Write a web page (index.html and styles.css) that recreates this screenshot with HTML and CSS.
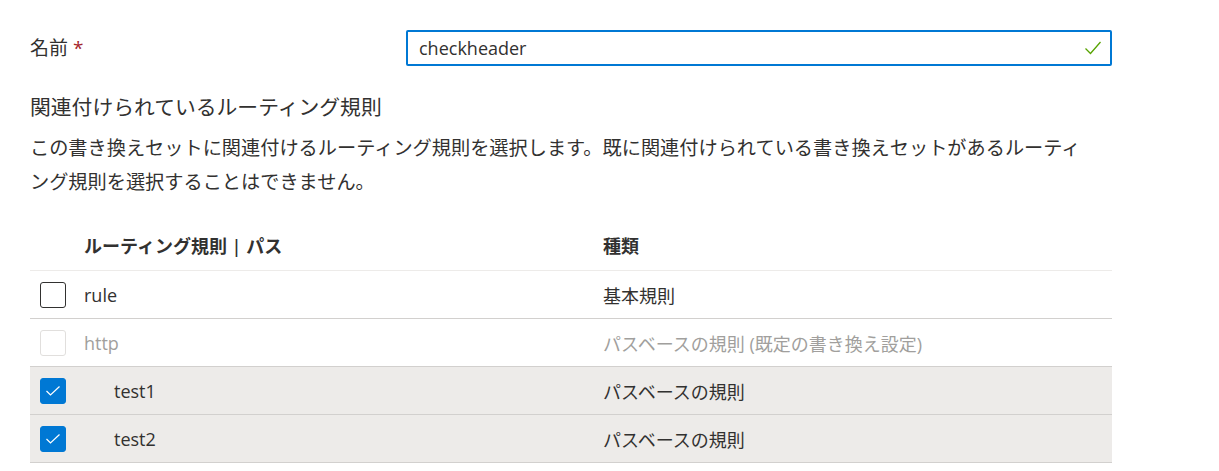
FILE: index.html
```html
<!DOCTYPE html>
<html lang="ja">
<head>
  <meta charset="UTF-8">
  <title>書き換えセット</title>
  <link rel="stylesheet" href="styles.css">
</head>
<body>
  <div class="page">

    <div class="field">
      <label class="field-label" for="name">名前 <span class="req">*</span></label>
      <div class="textbox">
        <input id="name" type="text" value="checkheader">
        <svg class="valid" width="18" height="16" viewBox="0 0 18 16">
          <path d="M1.5 8.5 L6.5 13.5 L16.5 2" fill="none" stroke="#57a300" stroke-width="1.3"/>
        </svg>
      </div>
    </div>

    <h2 class="section-title">関連付けられているルーティング規則</h2>
    <p class="section-desc">この書き換えセットに関連付けるルーティング規則を選択します。既に関連付けられている書き換えセットがあるルーティング規則を選択することはできません。</p>

    <div class="grid">
      <div class="grid-row grid-head">
        <div class="cell"></div>
        <div class="cell">ルーティング規則 | パス</div>
        <div class="cell">種類</div>
      </div>

      <div class="grid-row">
        <div class="cell"><span class="box"></span></div>
        <div class="cell">rule</div>
        <div class="cell">基本規則</div>
      </div>

      <div class="grid-row disabled">
        <div class="cell"><span class="box"></span></div>
        <div class="cell">http</div>
        <div class="cell">パスベースの規則 (既定の書き換え設定)</div>
      </div>

      <div class="grid-row selected">
        <div class="cell"><span class="box checked"><svg width="16" height="12" viewBox="0 0 16 12"><path d="M1.5 6 L5.5 10 L14.5 1.5" fill="none" stroke="#fff" stroke-width="1.2"/></svg></span></div>
        <div class="cell child">test1</div>
        <div class="cell">パスベースの規則</div>
      </div>

      <div class="grid-row selected">
        <div class="cell"><span class="box checked"><svg width="16" height="12" viewBox="0 0 16 12"><path d="M1.5 6 L5.5 10 L14.5 1.5" fill="none" stroke="#fff" stroke-width="1.2"/></svg></span></div>
        <div class="cell child">test2</div>
        <div class="cell">パスベースの規則</div>
      </div>
    </div>

  </div>
</body>
</html>
```

FILE: styles.css
```css
body {
  margin: 0;
  background: #fff;
  color: #323130;
  font-family: "Open Sans", "Noto Sans CJK JP", sans-serif;
}

.page {
  padding: 30px 30px 0 30px;
  width: 1082px;
}

/* name field */
.field {
  display: grid;
  grid-template-columns: 376px 1fr;
  align-items: center;
}

.field-label {
  font-size: 19px;
  line-height: 36px;
}

.req {
  color: #a4262c;
}

.textbox {
  display: flex;
  align-items: center;
  height: 32px;
  border: 2px solid #0078d4;
  border-radius: 2px;
  padding: 0 8px 0 11px;
}

.textbox input {
  flex: 1;
  border: none;
  outline: none;
  font-family: inherit;
  font-size: 18px;
  color: #323130;
  padding: 0;
  background: transparent;
}

.valid {
  display: block;
}

/* section */
.section-title {
  margin: 27px 0 0 0;
  font-size: 20.8px;
  font-weight: normal;
  line-height: 28px;
}

.section-desc {
  margin: 10px 0 0 0;
  font-size: 19.2px;
  line-height: 34px;
  width: 1060px;
}

/* routing rule grid */
.grid {
  margin-top: 24px;
  font-size: 18px;
}

.grid-row {
  display: grid;
  grid-template-columns: 54px 519px 1fr;
  align-items: center;
  height: 47px;
  border-bottom: 1px solid #d2d0ce;
}

.grid-head {
  font-weight: 600;
  border-bottom-color: #edebe9;
  padding-bottom: 4px;
  height: 43px;
}

.cell {
  white-space: nowrap;
}

.cell.child {
  padding-left: 30px;
}

.box {
  display: flex;
  align-items: center;
  justify-content: center;
  box-sizing: border-box;
  width: 26px;
  height: 26px;
  margin-left: 10px;
  border: 1px solid #323130;
  border-radius: 3px;
}

.box.checked {
  background: #0078d4;
  border-color: #0078d4;
}

.disabled {
  color: #a19f9d;
}

.disabled .box {
  border-color: #e1dfdd;
}

.selected {
  background: #edebe9;
}
```
